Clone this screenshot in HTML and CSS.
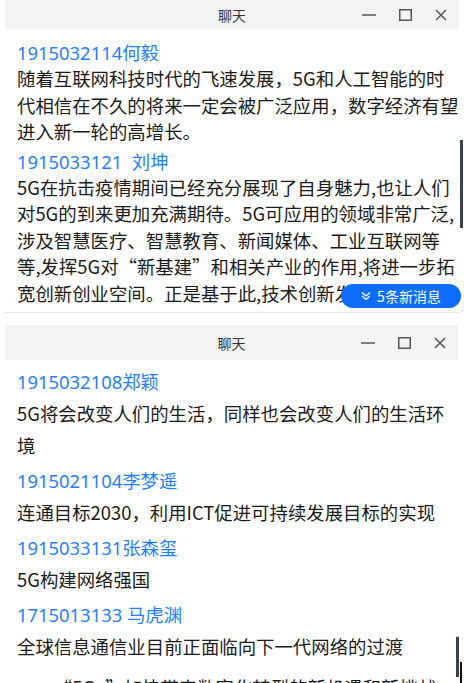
FILE: index.html
```html
<!DOCTYPE html>
<html lang="zh-CN">
<head>
    <meta charset="UTF-8">
    <meta name="viewport" content="width=device-width, initial-scale=1.0">
    <title>聊天</title>
    <link rel="stylesheet" href="styles.css">
</head>
<body>

    <div class="window window-top">
        <div class="title-bar">
            <span></span>
            <span class="title">聊天</span>
            <div class="controls">
                <button class="ctrl"><svg width="14" height="12" viewBox="0 0 14 12"><line x1="0" y1="6" x2="14" y2="6" stroke="#555" stroke-width="1.5"/></svg></button>
                <button class="ctrl"><svg width="13" height="12" viewBox="0 0 13 12"><rect x="0.75" y="0.75" width="11.5" height="10.5" fill="none" stroke="#555" stroke-width="1.5"/></svg></button>
                <button class="ctrl"><svg width="12" height="12" viewBox="0 0 12 12"><path d="M1 1 L11 11 M11 1 L1 11" stroke="#555" stroke-width="1.5"/></svg></button>
            </div>
        </div>
        <div class="messages">
            <div class="msg">
                <div class="name">1915032114何毅</div>
                <p class="text">随着互联网科技时代的飞速发展，5G和人工智能的时代相信在不久的将来一定会被广泛应用，数字经济有望进入新一轮的高增长。</p>
            </div>
            <div class="msg">
                <div class="name">1915033121&nbsp;&nbsp;刘坤</div>
                <p class="text">5G在抗击疫情期间已经充分展现了自身魅力,也让人们对5G的到来更加充满期待。5G可应用的领域非常广泛,涉及智慧医疗、智慧教育、新闻媒体、工业互联网等等,发挥5G对“新基建”和相关产业的作用,将进一步拓宽创新创业空间。正是基于此,技术创新发展正迎来新的机遇。</p>
            </div>
        </div>
        <button class="new-msg">
            <svg width="10" height="10" viewBox="0 0 10 10"><path d="M1 1.5 L5 5 L9 1.5 M1 5 L5 8.5 L9 5" fill="none" stroke="#fff" stroke-width="1.3"/></svg>
            5条新消息
        </button>
        <div class="thumb thumb-top"></div>
    </div>

    <div class="window window-bottom">
        <div class="title-bar">
            <span></span>
            <span class="title">聊天</span>
            <div class="controls">
                <button class="ctrl"><svg width="14" height="12" viewBox="0 0 14 12"><line x1="0" y1="6" x2="14" y2="6" stroke="#555" stroke-width="1.5"/></svg></button>
                <button class="ctrl"><svg width="13" height="12" viewBox="0 0 13 12"><rect x="0.75" y="0.75" width="11.5" height="10.5" fill="none" stroke="#555" stroke-width="1.5"/></svg></button>
                <button class="ctrl"><svg width="12" height="12" viewBox="0 0 12 12"><path d="M1 1 L11 11 M11 1 L1 11" stroke="#555" stroke-width="1.5"/></svg></button>
            </div>
        </div>
        <div class="messages">
            <div class="msg">
                <div class="name">1915032108郑颖</div>
                <p class="text">5G将会改变人们的生活，同样也会改变人们的生活环境</p>
            </div>
            <div class="msg">
                <div class="name">1915021104李梦遥</div>
                <p class="text">连通目标2030，利用ICT促进可持续发展目标的实现</p>
            </div>
            <div class="msg">
                <div class="name">1915033131张森玺</div>
                <p class="text">5G构建网络强国</p>
            </div>
            <div class="msg">
                <div class="name">1715013133 马虎渊</div>
                <p class="text">全球信息通信业目前正面临向下一代网络的过渡</p>
            </div>
            <div class="msg msg-more">
                <p class="text">——“5G+”加快带来数字化转型的新机遇和新挑战，同时也</p>
            </div>
        </div>
        <div class="thumb thumb-bottom"></div>
        <div class="thumb-edge"></div>
    </div>

</body>
</html>
```

FILE: styles.css
```css
body {
    margin: 0;
    padding: 0;
    height: 683px;
    overflow: hidden;
    background-color: #fff;
    font-family: "Noto Sans CJK SC", "Noto Sans", sans-serif;
    color: #1a1a1a;
}

.window {
    position: relative;
    margin: 0 4px 0 5px;
}

.window-top {
    border-bottom: 1px solid #e3e3e3;
}

.window-bottom {
    margin-top: 12px;
}

.title-bar {
    display: grid;
    grid-template-columns: 1fr auto 1fr;
    align-items: center;
    height: 29px;
    margin-right: 1px;
    background-color: #f3f3f3;
}

.window-bottom .title-bar {
    height: 35px;
    margin-right: 2px;
}

.title {
    font-size: 14px;
    color: #333;
}

.controls {
    display: flex;
    justify-content: flex-end;
}

.ctrl {
    width: 36px;
    height: 24px;
    padding: 0;
    border: none;
    background: none;
    display: flex;
    align-items: center;
    justify-content: center;
}

.messages {
    padding-left: 12px;
    overflow: hidden;
}

.window-top .messages {
    height: 277px;
    margin-bottom: 6px;
    padding-top: 12px;
    box-sizing: border-box;
}

.window-bottom .messages {
    padding-top: 7px;
}

.msg + .msg {
    margin-top: 5px;
}

.msg + .msg-more {
    margin-top: 9px;
}

.name {
    font-family: "Noto Sans", "Noto Sans CJK SC", sans-serif;
    font-size: 18.4px;
    line-height: 24px;
    color: #1f7fff;
}

.text {
    margin: 0;
    font-size: 18.4px;
    line-height: 26.5px;
}

.window-bottom .name {
    line-height: 30px;
}

.window-bottom .text {
    line-height: 32px;
}

.new-msg {
    position: absolute;
    right: -1px;
    bottom: 4px;
    width: 120px;
    height: 24px;
    border: none;
    border-radius: 12px;
    background-color: #0d6efd;
    color: white;
    font-family: "Noto Sans CJK SC", sans-serif;
    font-size: 14px;
    display: flex;
    align-items: center;
    justify-content: center;
    gap: 6px;
    padding: 0;
}

.thumb {
    position: absolute;
    width: 3px;
    background-color: #3b4050;
}

.thumb-top {
    right: -3px;
    top: 140px;
    height: 88px;
}

.thumb-bottom {
    right: 1px;
    top: 311px;
    height: 40px;
    border-top: 1px solid #d8dbe2;
}

.thumb-edge {
    position: absolute;
    right: -2px;
    top: 337px;
    width: 2px;
    height: 30px;
    background-color: #111;
}
```
